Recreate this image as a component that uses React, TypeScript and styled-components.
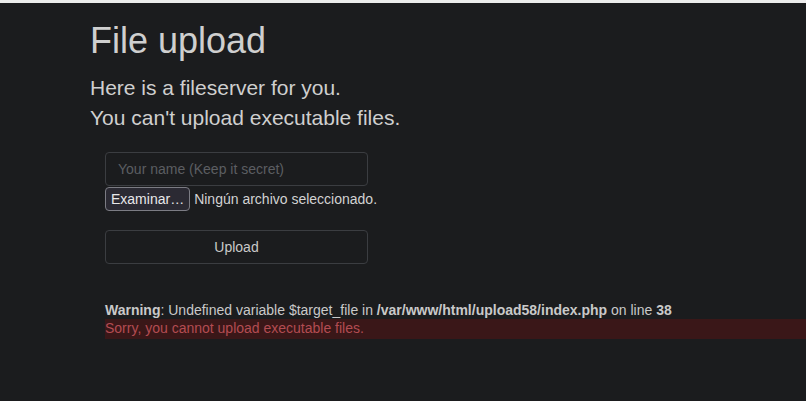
import React, { useState } from "react";
import styled, { createGlobalStyle } from "styled-components";

const GlobalStyle = createGlobalStyle`
  html, body {
    margin: 0;
    padding: 0;
    background-color: #1b1c1e;
  }
  body {
    font-family: "Liberation Sans", Arial, sans-serif;
    color: #c9c9c9;
  }
`;

const TopStrip = styled.div`
  height: 3px;
  background-color: #ececec;
`;

const Page = styled.div`
  min-height: 398px;
  background-color: #1b1c1e;
  padding: 16px 0 0 90px;
  box-sizing: border-box;
`;

const Title = styled.h1`
  margin: 0;
  font-size: 36px;
  font-weight: 400;
  line-height: 43px;
  color: #cfcfcf;
`;

const Lead = styled.p`
  margin: 11px 0 0;
  font-size: 21px;
  line-height: 30px;
  color: #cfcfcf;
`;

const Form = styled.form`
  display: flex;
  flex-direction: column;
  width: 263px;
  margin: 19px 0 0 15px;
`;

const TextInput = styled.input`
  box-sizing: border-box;
  height: 34px;
  padding: 0 12px;
  border: 1px solid #3b3d41;
  border-radius: 4px;
  background-color: #1b1c1e;
  color: #c9c9c9;
  font-family: "Liberation Sans", Arial, sans-serif;
  font-size: 14px;
  outline: none;
  &::placeholder {
    color: #5c5e62;
  }
`;

const FileRow = styled.div`
  display: flex;
  align-items: center;
  gap: 4px;
  margin-top: 1px;
  white-space: nowrap;
`;

const FileButton = styled.button`
  box-sizing: border-box;
  height: 24px;
  padding: 0 5px;
  border: 1px solid #7c7c84;
  border-radius: 4px;
  background-color: #2b2a33;
  color: #e8e8ea;
  font-family: "Liberation Sans", Arial, sans-serif;
  font-size: 14px;
  cursor: pointer;
`;

const FileLabel = styled.span`
  font-size: 14px;
  color: #d2d2d2;
`;

const SubmitButton = styled.button`
  box-sizing: border-box;
  height: 34px;
  margin-top: 19px;
  border: 1px solid #3b3d41;
  border-radius: 4px;
  background-color: #1b1c1e;
  color: #c9c9c9;
  font-family: "Liberation Sans", Arial, sans-serif;
  font-size: 14px;
  cursor: pointer;
`;

const Notices = styled.div`
  margin: 36px 0 0 15px;
  font-size: 14px;
`;

const Warning = styled.div`
  line-height: 20px;
  color: #c9c9c9;
  b {
    font-weight: 700;
  }
`;

const ErrorBand = styled.div`
  margin-top: -1px;
  height: 20px;
  line-height: 18px;
  background-color: #3a1718;
  color: #b34c52;
`;

const App: React.FC = () => {
  const [name, setName] = useState<string>("");

  return (
    <>
      <GlobalStyle />
      <TopStrip />
      <Page>
        <Title>File upload</Title>
        <Lead>
          Here is a fileserver for you.
          <br />
          You can't upload executable files.
        </Lead>
        <Form onSubmit={(e) => e.preventDefault()}>
          <TextInput
            type="text"
            placeholder="Your name (Keep it secret)"
            value={name}
            onChange={(e) => setName(e.target.value)}
          />
          <FileRow>
            <FileButton type="button">Examinar…</FileButton>
            <FileLabel>Ningún archivo seleccionado.</FileLabel>
          </FileRow>
          <SubmitButton type="submit">Upload</SubmitButton>
        </Form>
        <Notices>
          <Warning>
            <b>Warning</b>: Undefined variable $target_file in{" "}
            <b>/var/www/html/upload58/index.php</b> on line <b>38</b>
          </Warning>
          <ErrorBand>Sorry, you cannot upload executable files.</ErrorBand>
        </Notices>
      </Page>
    </>
  );
};

export default App;
